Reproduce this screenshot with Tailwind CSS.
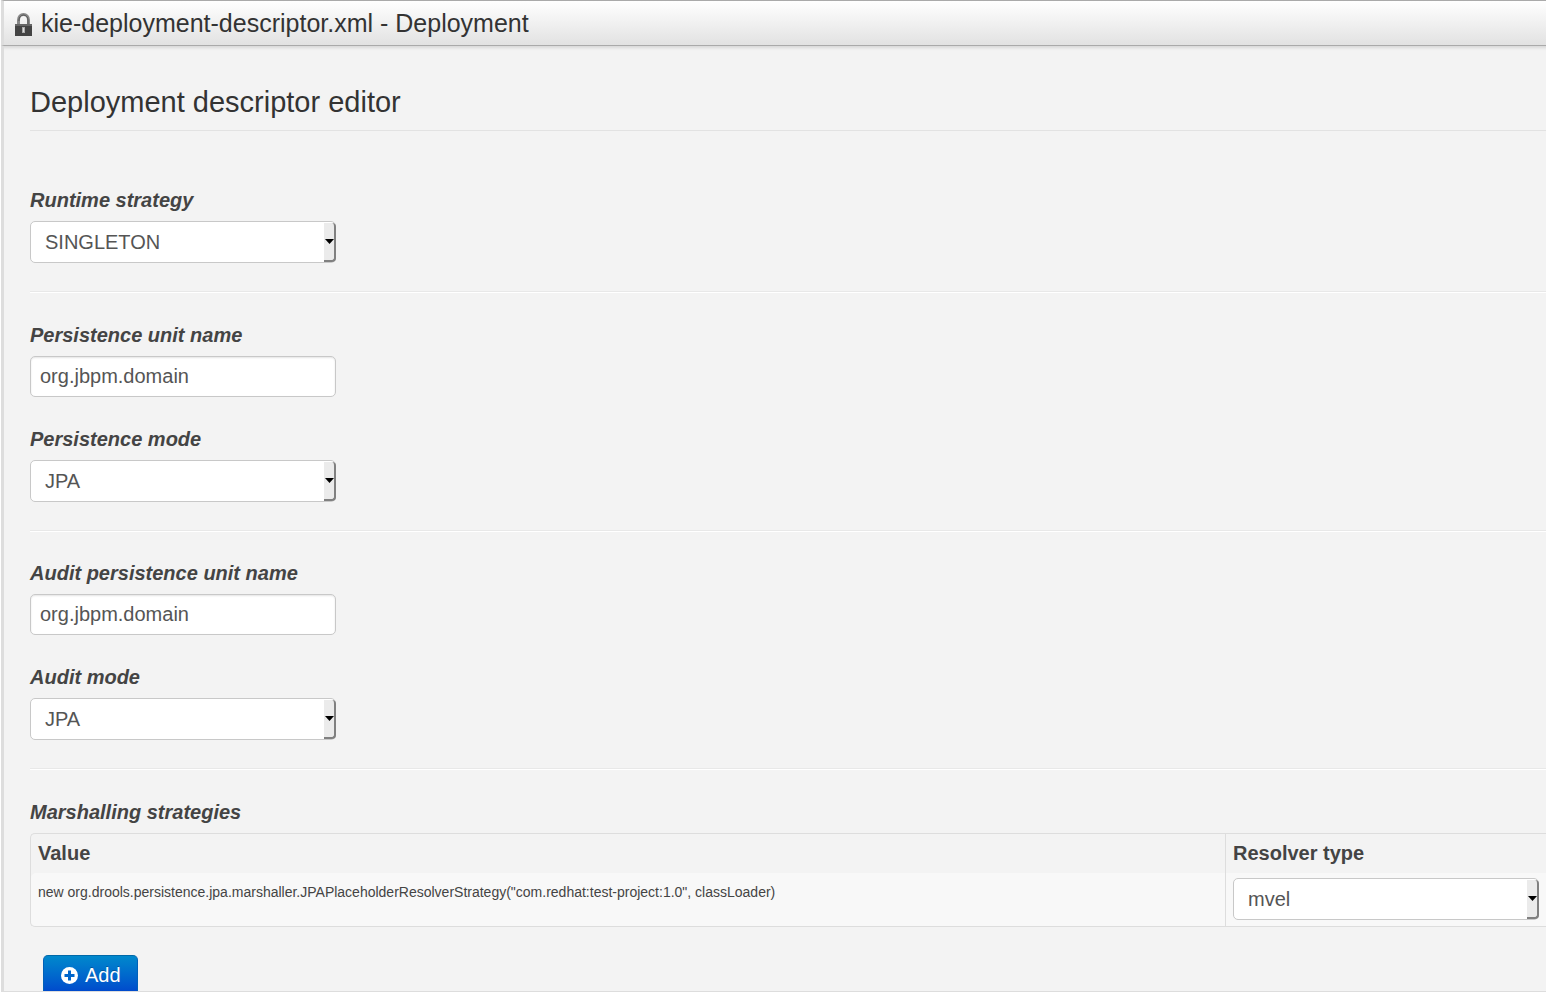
<!DOCTYPE html>
<html lang="en">

<head>
    <meta charset="UTF-8" />
    <title>kie-deployment-descriptor.xml - Deployment</title>
    <meta name="viewport" content="width=device-width, initial-scale=1.0" />
    <script src="https://cdn.jsdelivr.net/npm/@tailwindcss/browser@4"></script>
</head>

<body class="flex flex-col h-screen overflow-hidden bg-white pb-[10px] pl-px font-['Liberation_Sans',Arial,sans-serif] text-[#444]">
    <!-- Title bar -->
    <header class="flex shrink-0 items-center gap-2 h-[46px] pl-[11px] border-t border-b border-[#aaa] border-l-3 border-l-[#ddd] bg-linear-to-b from-white to-[#e2e2e2]">
        <svg class="w-[18px] h-6 shrink-0 mt-1" viewBox="0 0 18 24" fill="none">
            <path d="M3.500 11V7a5 5.500 0 0 1 10 0V11" stroke="#888" stroke-width="3" />
            <path d="M4 8V7a4.500 5 0 0 1 9 0V11" stroke="#555" stroke-width="1" />
            <rect x="0" y="11" width="17" height="12" fill="#444" />
            <rect x="0" y="11" width="17" height="2" fill="#666" />
            <path d="M7 14h3v6H7z" fill="#aaa" />
            <path d="M8 15h1v4H8z" fill="#ddd" />
        </svg>
        <h1 class="text-[25px] leading-[30px] text-[#333]">kie-deployment-descriptor.xml - Deployment</h1>
    </header>

    <!-- Editor -->
    <main class="flex-1 min-h-0 overflow-hidden border-l-3 border-b border-[#ddd] bg-[#f3f3f3] pl-[26px] shadow-[inset_0_5px_3px_-3px_#d8d8d8]">
        <h2 class="pt-9 pb-2 text-[29px] leading-10 text-[#333] border-b border-[#e2e2e2]">Deployment descriptor editor</h2>

        <form class="pt-[54px]">
            <label for="runtime" class="block mb-[6px] text-xl leading-[30px] font-bold italic">Runtime strategy</label>
            <div class="relative w-[306px]">
                <select id="runtime" class="block appearance-none w-full h-[42px] pl-[14px] rounded-[5px] border border-[#c8c8c8] bg-white text-xl text-[#555]">
                    <option>SINGLETON</option>
                    <option>PER_REQUEST</option>
                    <option>PER_PROCESS_INSTANCE</option>
                </select>
                <span class="absolute right-0 top-[2px] bottom-px flex items-center justify-center w-3 rounded-r-[4px] border-r-2 border-b-2 border-[#808080] bg-[#ebebeb] pointer-events-none">
                    <svg class="w-[9px] h-[5px] shrink-0" viewBox="0 0 9 5"><path d="M0 0h9L4.500 5z" fill="#000" /></svg>
                </span>
            </div>

            <hr class="mt-7 mb-[27px] border-t border-b border-t-[#e8e8e8] border-b-white" />

            <label for="punit" class="block mb-[6px] text-xl leading-[30px] font-bold italic">Persistence unit name</label>
            <input id="punit" type="text" value="org.jbpm.domain" class="block w-[306px] h-[41px] px-[9px] rounded-[5px] border border-[#c8c8c8] bg-white text-xl text-[#555] shadow-[inset_0_1px_2px_#e4e4e4]" />

            <label for="pmode" class="block mt-[27px] mb-[6px] text-xl leading-[30px] font-bold italic">Persistence mode</label>
            <div class="relative w-[306px]">
                <select id="pmode" class="block appearance-none w-full h-[42px] pl-[14px] rounded-[5px] border border-[#c8c8c8] bg-white text-xl text-[#555]">
                    <option>JPA</option>
                    <option>NONE</option>
                </select>
                <span class="absolute right-0 top-[2px] bottom-px flex items-center justify-center w-3 rounded-r-[4px] border-r-2 border-b-2 border-[#808080] bg-[#ebebeb] pointer-events-none">
                    <svg class="w-[9px] h-[5px] shrink-0" viewBox="0 0 9 5"><path d="M0 0h9L4.500 5z" fill="#000" /></svg>
                </span>
            </div>

            <hr class="mt-7 mb-[26px] border-t border-b border-t-[#e8e8e8] border-b-white" />

            <label for="aunit" class="block mb-[6px] text-xl leading-[30px] font-bold italic">Audit persistence unit name</label>
            <input id="aunit" type="text" value="org.jbpm.domain" class="block w-[306px] h-[41px] px-[9px] rounded-[5px] border border-[#c8c8c8] bg-white text-xl text-[#555] shadow-[inset_0_1px_2px_#e4e4e4]" />

            <label for="amode" class="block mt-[27px] mb-[6px] text-xl leading-[30px] font-bold italic">Audit mode</label>
            <div class="relative w-[306px]">
                <select id="amode" class="block appearance-none w-full h-[42px] pl-[14px] rounded-[5px] border border-[#c8c8c8] bg-white text-xl text-[#555]">
                    <option>JPA</option>
                    <option>JMS</option>
                    <option>NONE</option>
                </select>
                <span class="absolute right-0 top-[2px] bottom-px flex items-center justify-center w-3 rounded-r-[4px] border-r-2 border-b-2 border-[#808080] bg-[#ebebeb] pointer-events-none">
                    <svg class="w-[9px] h-[5px] shrink-0" viewBox="0 0 9 5"><path d="M0 0h9L4.500 5z" fill="#000" /></svg>
                </span>
            </div>

            <hr class="mt-7 mb-[27px] border-t border-b border-t-[#e8e8e8] border-b-white" />

            <h3 id="marshalling" class="mb-[6px] text-xl leading-[30px] font-bold italic">Marshalling strategies</h3>
            <table aria-labelledby="marshalling" class="w-full table-fixed border-separate border-spacing-0 rounded-l-[5px] border border-r-0 border-[#ddd] text-left">
                <thead>
                    <tr class="h-[39px] text-xl">
                        <th class="px-[7px] pb-[2px] font-bold">Value</th>
                        <th class="w-[321px] px-[7px] pb-[2px] border-l border-[#ddd] font-bold">Resolver type</th>
                    </tr>
                </thead>
                <tbody>
                    <tr class="h-[53px] align-top">
                        <td class="px-[7px] pt-[9px] rounded-l-[5px] bg-[#f8f8f8] text-sm">new org.drools.persistence.jpa.marshaller.JPAPlaceholderResolverStrategy("com.redhat:test-project:1.0", classLoader)</td>
                        <td class="pl-[7px] pt-[5px] border-l border-[#ddd] bg-[#f8f8f8]">
                            <div class="relative w-[306px]">
                                <select aria-label="Resolver type" class="block appearance-none w-full h-[42px] pl-[14px] rounded-[5px] border border-[#c8c8c8] bg-white text-xl text-[#555]">
                                    <option>mvel</option>
                                    <option>reflection</option>
                                </select>
                                <span class="absolute right-0 top-[2px] bottom-px flex items-center justify-center w-3 rounded-r-[4px] border-r-2 border-b-2 border-[#808080] bg-[#ebebeb] pointer-events-none">
                                    <svg class="w-[9px] h-[5px] shrink-0" viewBox="0 0 9 5"><path d="M0 0h9L4.500 5z" fill="#000" /></svg>
                                </span>
                            </div>
                        </td>
                    </tr>
                </tbody>
            </table>

            <button type="button" class="flex items-center gap-[7px] mt-7 ml-[13px] px-4 pl-[17px] h-10 rounded-[5px] border border-t-[#0068a8] border-x-[#0060b8] border-b-[#003399] bg-linear-to-b from-[#0088cc] to-[#0044cc] text-xl text-white text-shadow-[0_-1px_0_#00000040]">
                <svg class="w-[17px] h-[17px] shrink-0" viewBox="0 0 17 17">
                    <circle cx="8.500" cy="8.500" r="8.500" fill="#fff" />
                    <path d="M7 3.500h3V7h3.500v3H10v3.500H7V10H3.500V7H7z" fill="#0066cc" />
                </svg>
                Add
            </button>
        </form>
    </main>
</body>

</html>
